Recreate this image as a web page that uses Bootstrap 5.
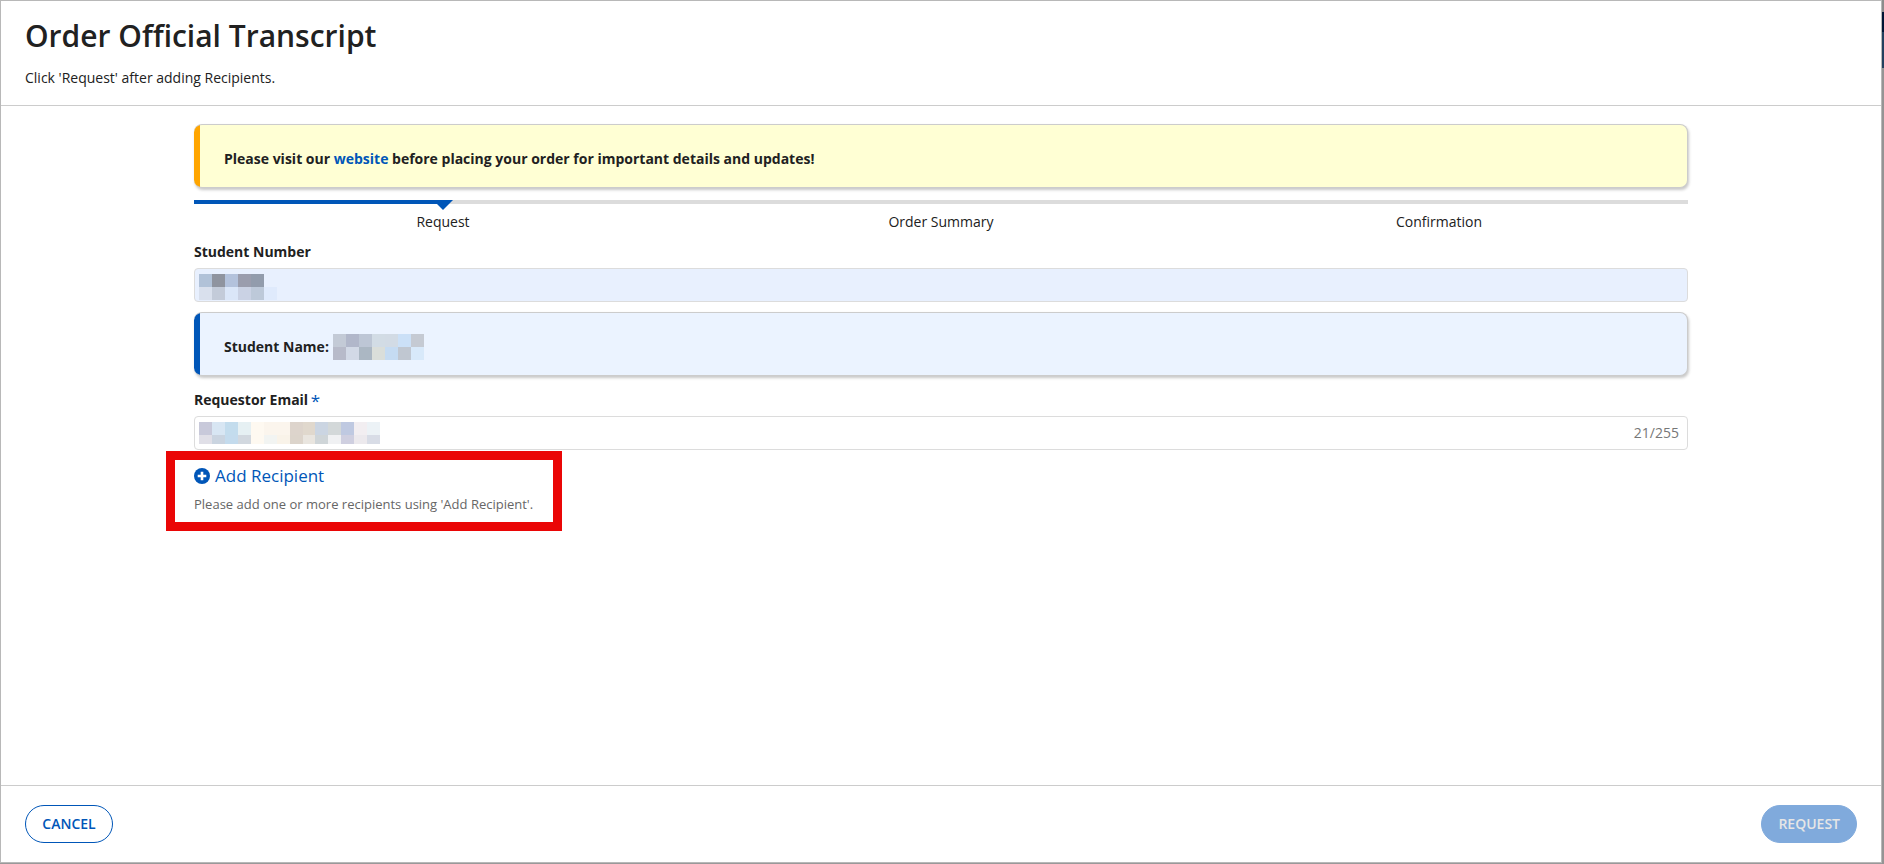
<!DOCTYPE html>
<html lang="en">
<head>
<meta charset="utf-8">
<meta name="viewport" content="width=device-width, initial-scale=1">
<title>Order Official Transcript</title>
<link href="https://cdn.jsdelivr.net/npm/bootstrap@5.3.0/dist/css/bootstrap.min.css" rel="stylesheet">
<style>
  body { font-family: "Open Sans", "Noto Sans", sans-serif; font-size: 14px; line-height: 20px; color: #212121; background: #999; }
  a { color: #0056b8; text-decoration: none; }
  .backdrop-edge { width: 2px; background: linear-gradient(#8c8c8c 12px, #001535 12px 32px, #23415f 32px 68px, #949494 68px); }
  .dialog-pane { border: 1px solid #b8b8b8; margin-bottom: 1px; }
  .dialog-head { padding: 16px 24px 17px; border-bottom: 1px solid #ccc; }
  .dialog-head h1 { font-size: 30px; line-height: 38px; font-weight: 600; margin-bottom: 13px; }
  .dialog-foot { padding: 19px 24px; border-top: 1px solid #ccc; }
  .form-area { width: 100%; max-width: 1494px; padding-top: 18px; }
  .notice { border: 1px solid #ccc; border-left-width: 0; border-radius: 8px; min-height: 64px; padding: 5px 30px 0; background-image: linear-gradient(90deg, var(--edge) 6px, transparent 6px); box-shadow: 1px 2px 3px rgba(0,0,0,.22); font-weight: 700; }
  .notice-warn { --edge: #ffa500; background-color: #ffffd4; }
  .notice-info { --edge: #0056b8; background-color: #ebf3ff; margin-top: 10px; }
  .steps li { border-top: 4px solid #dcdcdc; padding-top: 8px; }
  .steps .current::before { content: ""; position: absolute; left: 0; top: -4px; width: 50%; height: 4px; background: #0056b8; }
  .steps .current::after { content: ""; position: absolute; left: calc(50% - 10px); top: -4px; border: 10px solid transparent; border-top-color: #0056b8; border-bottom: 0; }
  .field-group { padding-top: 10px; }
  .notice + .field-group { padding-top: 14px; }
  .field-label { font-weight: 700; margin-bottom: 6px; line-height: 20px; }
  .field-box { height: 34px; border: 1px solid #dcdcdc; border-radius: 4px; font-size: 14px; }
  .field-box.filled { background: #e8f0fe; }
  .required-mark { color: #0056b8; font-size: 17px; line-height: 16px; font-weight: 400; vertical-align: -2px; margin-left: -1px; }
  .redaction { position: absolute; left: 5px; top: 6px; }
  .counter { position: absolute; right: 9px; top: 7px; color: #777; }
  .callout { border: 9px solid #ea0606; margin: 1px 0 0 -28px; width: 396px; height: 80px; padding: 4px 0 0 19px; background: #fff; }
  .add-btn { font-size: 17px; line-height: 24px; color: #0056b8; gap: 5px; }
  .hint { font-size: 13px; color: #666; margin: 6px 0 0; white-space: nowrap; }
  .pill { height: 38px; min-width: 88px; border-radius: 19px; font-size: 14px; font-weight: 600; padding: 0 16px; line-height: 20px; }
  .pill-outline, .pill-outline:hover { border: 1px solid #0056b8; color: #0056b8; background: #fff; }
  .pill-fill, .pill-fill:disabled { border-color: #80aadc; background: #80aadc; color: #e6e6e6; opacity: 1; }
</style>
</head>
<body>
<div class="d-flex min-vh-100">
  <main class="dialog-pane bg-white flex-grow-1 d-flex flex-column">
    <header class="dialog-head">
      <h1>Order Official Transcript</h1>
      <p class="mb-0">Click 'Request' after adding Recipients.</p>
    </header>

    <form class="form-area mx-auto flex-grow-1">
      <div class="notice notice-warn d-flex align-items-center">
        <p class="mb-0">Please visit our <a href="#">website</a> before placing your order for important details and updates!</p>
      </div>

      <ol class="steps list-unstyled row g-0 text-center mb-0 mt-2 pt-1">
        <li class="col-4 position-relative current" aria-current="step">Request</li>
        <li class="col-4">Order Summary</li>
        <li class="col-4">Confirmation</li>
      </ol>

      <div class="field-group">
        <label class="field-label d-block" for="studentNumber">Student Number</label>
        <div class="position-relative">
          <input class="form-control field-box filled" id="studentNumber" type="text">
          <svg class="redaction" width="78" height="26" shape-rendering="crispEdges" aria-hidden="true">
            <path fill="#b1c2d8" d="M0 0h13v13H0z"/><path fill="#8f949f" d="M13 0h13v13H13z"/><path fill="#b3c2dc" d="M26 0h13v13H26z"/><path fill="#9a9dad" d="M39 0h13v13H39z"/><path fill="#929cac" d="M52 0h13v13H52z"/>
            <path fill="#d9e0ed" d="M0 13h13v13H0z"/><path fill="#c3cbd9" d="M13 13h13v13H13z"/><path fill="#dae6f8" d="M26 13h13v13H26z"/><path fill="#cad2e4" d="M39 13h13v13H39z"/><path fill="#bdc9d9" d="M52 13h13v13H52z"/><path fill="#dfeafc" d="M65 13h13v13H65z"/>
          </svg>
        </div>
      </div>

      <div class="notice notice-info d-flex align-items-center gap-1">
        <span>Student Name:</span>
        <svg width="91" height="26" shape-rendering="crispEdges" aria-hidden="true">
          <path fill="#c3cad6" d="M0 0h13v13H0z"/><path fill="#b1b7ca" d="M13 0h13v13H13z"/><path fill="#bdc6d5" d="M26 0h13v13H26z"/><path fill="#d2dce5" d="M39 0h13v13H39z"/><path fill="#d2dbe5" d="M52 0h13v13H52z"/><path fill="#cbe0f7" d="M65 0h13v13H65z"/><path fill="#c5cad3" d="M78 0h13v13H78z"/>
          <path fill="#b7bac9" d="M0 13h13v13H0z"/><path fill="#d2d9e6" d="M13 13h13v13H13z"/><path fill="#abb7c3" d="M26 13h13v13H26z"/><path fill="#dadeda" d="M39 13h13v13H39z"/><path fill="#c5dbf2" d="M52 13h13v13H52z"/><path fill="#c0c7d1" d="M65 13h13v13H65z"/><path fill="#d8e9fa" d="M78 13h13v13H78z"/>
        </svg>
      </div>

      <div class="field-group">
        <label class="field-label d-block" for="email">Requestor Email <span class="required-mark">*</span></label>
        <div class="position-relative">
          <input class="form-control field-box" id="email" type="email" required>
          <svg class="redaction" width="181" height="22" shape-rendering="crispEdges" aria-hidden="true">
            <path fill="#c8c9da" d="M0 0h13v13H0z"/><path fill="#d8e6f3" d="M13 0h13v13H13z"/><path fill="#c3dced" d="M26 0h13v13H26z"/><path fill="#e6f0f3" d="M39 0h13v13H39z"/><path fill="#fef9f1" d="M52 0h13v13H52z"/><path fill="#fbf5ed" d="M65 0h26v13H65z"/><path fill="#ddd4cc" d="M91 0h13v13H91z"/><path fill="#e0d8cd" d="M104 0h12v13H104z"/><path fill="#cbd5e2" d="M116 0h13v13H116z"/><path fill="#d3d8d9" d="M129 0h13v13H129z"/><path fill="#bfc9e1" d="M142 0h13v13H142z"/><path fill="#f2eef1" d="M155 0h13v13H155z"/><path fill="#ecf2f6" d="M168 0h13v13H168z"/>
            <path fill="#e0dfe7" d="M0 13h13v9H0z"/><path fill="#cad4e0" d="M13 13h13v9H13z"/><path fill="#c4dbed" d="M26 13h13v9H26z"/><path fill="#d2d8df" d="M39 13h13v9H39z"/><path fill="#fef9f1" d="M52 13h13v9H52z"/><path fill="#f2f4f2" d="M65 13h13v9H65z"/><path fill="#f9f3e9" d="M78 13h13v9H78z"/><path fill="#dcd4cb" d="M91 13h13v9H91z"/><path fill="#e9e5df" d="M104 13h12v9H104z"/><path fill="#cfd5d8" d="M116 13h13v9H116z"/><path fill="#f0f1f3" d="M129 13h13v9H129z"/><path fill="#cfcfe0" d="M142 13h13v9H142z"/><path fill="#ece9ed" d="M155 13h13v9H155z"/><path fill="#d8dce6" d="M168 13h13v9H168z"/>
          </svg>
          <span class="counter">21/255</span>
        </div>
      </div>

      <section class="callout">
        <button class="btn add-btn border-0 p-0 d-flex align-items-center" type="button">
          <svg width="16" height="16" viewBox="0 0 16 16" aria-hidden="true"><circle cx="8" cy="8" r="8" fill="#0056b8"/><path d="M8 3.7v8.6M3.7 8h8.6" stroke="#fff" stroke-width="2.6"/></svg>
          Add Recipient
        </button>
        <p class="hint">Please add one or more recipients using 'Add Recipient'.</p>
      </section>
    </form>

    <footer class="dialog-foot d-flex justify-content-between">
      <button class="btn pill pill-outline" type="button">CANCEL</button>
      <button class="btn pill pill-fill" type="button" disabled>REQUEST</button>
    </footer>
  </main>
  <div class="backdrop-edge"></div>
</div>
<script src="https://cdn.jsdelivr.net/npm/bootstrap@5.3.0/dist/js/bootstrap.bundle.min.js"></script>
</body>
</html>
